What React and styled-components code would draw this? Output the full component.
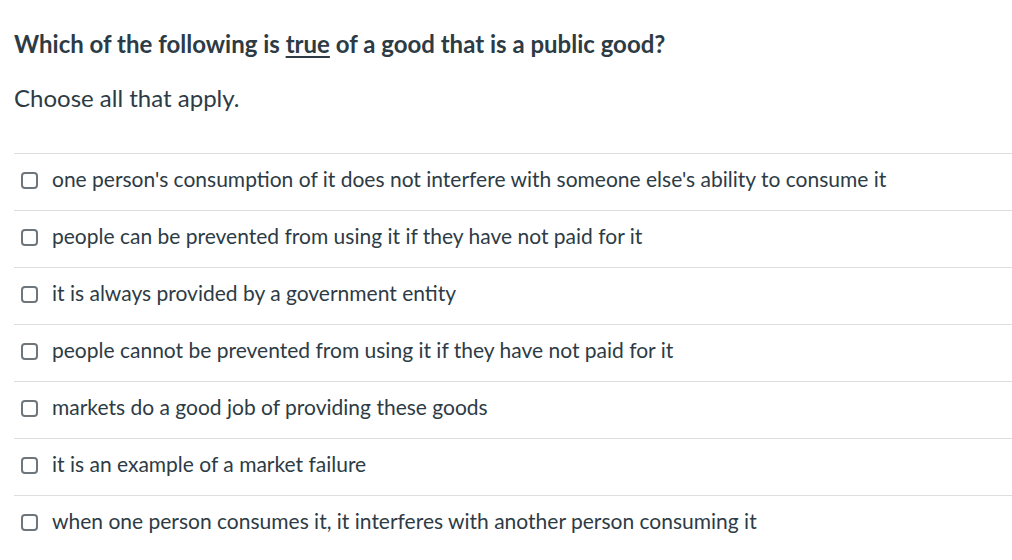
import React from 'react'
import styled, { createGlobalStyle } from 'styled-components'

const GlobalStyle = createGlobalStyle`
  body {
    margin: 0;
    background: #fff;
    font-family: Lato, "Open Sans", sans-serif;
    color: #2d3b45;
  }
`

const Page = styled.div`
  padding: 28px 0 0 14px;
`

const Title = styled.h2`
  margin: 0;
  font-size: 24px;
  font-weight: 700;
  line-height: 32px;
  color: #2d3b45;

  u {
    text-decoration-thickness: 2px;
    text-underline-offset: 3px;
  }
`

const Instructions = styled.p`
  margin: 22px 0 0;
  font-size: 24px;
  line-height: 32px;
`

const Options = styled.ul`
  list-style: none;
  margin: 39px 0 0;
  padding: 0;
`

const Option = styled.li`
  display: flex;
  align-items: center;
  gap: 14px;
  height: 50px;
  padding: 0 0 6px 7px;
  border-top: 1px solid #dcdee0;
  font-size: 21px;
  line-height: 26px;
`

const Box = styled.span`
  flex: none;
  width: 13px;
  height: 13px;
  margin-top: 3px;
  border: 2px solid #6f767b;
  border-radius: 4px;
`

const answers = [
  "one person's consumption of it does not interfere with someone else's ability to consume it",
  'people can be prevented from using it if they have not paid for it',
  'it is always provided by a government entity',
  'people cannot be prevented from using it if they have not paid for it',
  'markets do a good job of providing these goods',
  'it is an example of a market failure',
  'when one person consumes it, it interferes with another person consuming it',
]

export default function App() {
  return (
    <>
      <GlobalStyle />
      <Page>
        <Title>
          Which of the following is <u>true</u> of a good that is a public good?
        </Title>
        <Instructions>Choose all that apply.</Instructions>
        <Options>
          {answers.map((a) => (
            <Option key={a}>
              <Box />
              {a}
            </Option>
          ))}
        </Options>
      </Page>
    </>
  )
}
